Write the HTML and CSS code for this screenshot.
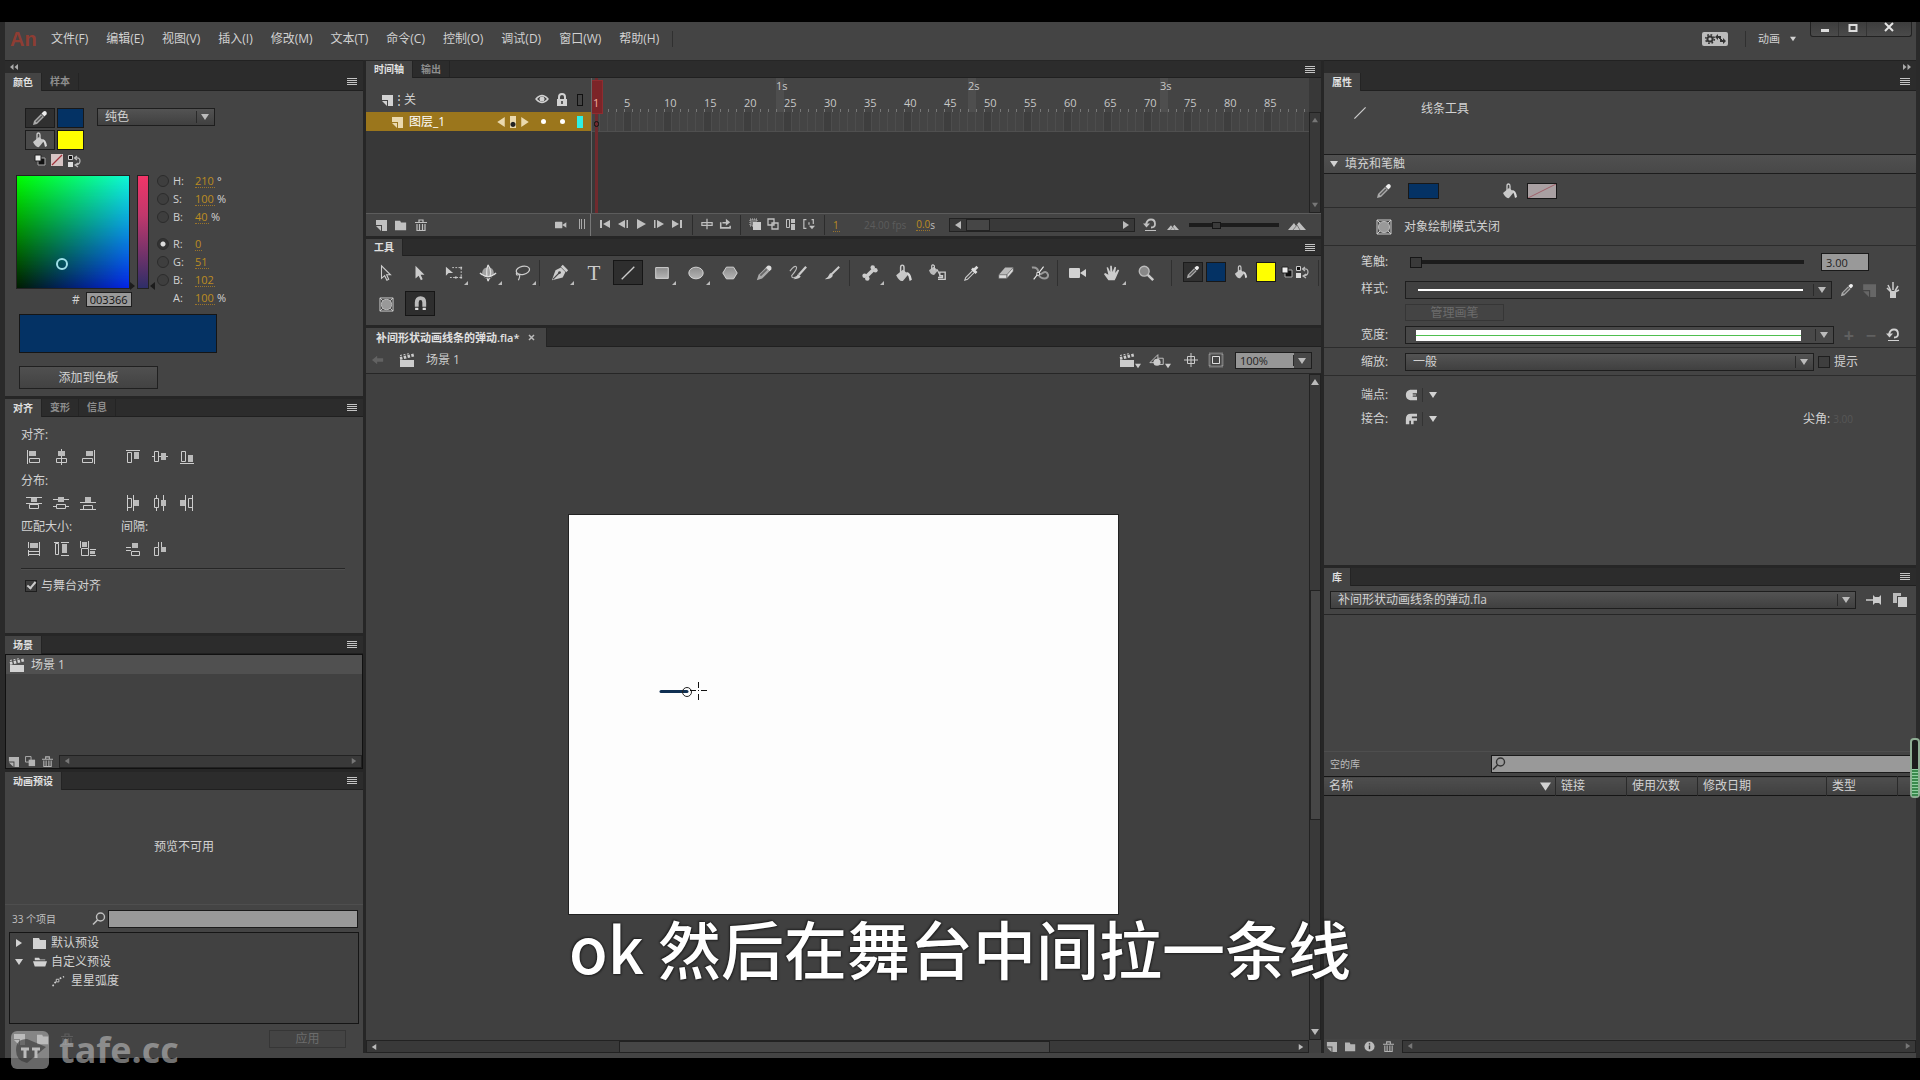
FILE: index.html
```html
<!DOCTYPE html>
<html lang="zh-CN">
<head>
<meta charset="utf-8">
<title>补间形状动画线条的弹动.fla</title>
<link rel="stylesheet" href="styles.css">
</head>
<body>
<svg class="sprite" aria-hidden="true">
  <linearGradient id="lg" x1="0" y1="0" x2="0" y2="1"><stop offset="0" stop-color="#8c8c8c"/><stop offset="1" stop-color="#b5b5b5"/></linearGradient>
  <symbol id="menu" viewBox="0 0 10 8"><path d="M0 .5h10M0 2.5h10M0 4.5h10M0 6.5h10" stroke="currentColor"/></symbol>
  <symbol id="pencil" viewBox="0 0 16 16"><path d="M1 15l1-4 7-7 3 3-7 7z" fill="#aaa"/><path d="M4 12l6-6" stroke="#555" stroke-width="1.5"/><path d="M9.500 3.500l2-2q1.500-1 2.700.2t.2 2.700l-2 2z" fill="#eee"/></symbol>
  <symbol id="bucket" viewBox="0 0 16 16"><path d="M1 10l6-5 5 4-5 6q-3 1-6-5z" fill="#c8c8c8"/><path d="M5 9V3q0-2 1.500-2T8 3v5" fill="none" stroke="#ccc" stroke-width="1.300"/><path d="M10 7q4 0 5 7l-2 1-1-4z" fill="#d8d8d8"/></symbol>
  <symbol id="bw" viewBox="0 0 12 12"><path d="M4 4h7v7H4z" fill="#111" stroke="#aaa"/><path d="M1 1h6v6H1z" fill="#eee" stroke="#222"/></symbol>
  <symbol id="none" viewBox="0 0 12 12"><path d="M0 0h12v12H0z" fill="#d5c3c3"/><path d="M1 11L11 1" stroke="#a3333c" stroke-width="1.300"/></symbol>
  <symbol id="swap" viewBox="0 0 14 12"><path d="M.5.5h4v4h-4z" fill="#111" stroke="#ccc"/><path d="M0 7h5v5H0z" fill="#ddd"/><path d="M7 3q5-1 5 3 0 3-4 4M9 1L6.500 3 9 5M10 8l-3 2 3 2" fill="none" stroke="#bbb" stroke-width="1.200"/></symbol>
  <symbol id="clap" viewBox="0 0 16 14"><path d="M1 7h14v7H1z" fill="currentColor"/><path d="M1 5.500L15 2" stroke="currentColor" stroke-width="3" stroke-dasharray="2.500 1.400"/><path d="M1 2.500L11 .5" stroke="currentColor" stroke-dasharray="2 1.500"/></symbol>
  <symbol id="new" viewBox="0 0 12 12"><path d="M1 1h11v11H7V6H1z" fill="currentColor"/><path d="M1 7h5v5z" fill="currentColor"/></symbol>
  <symbol id="folder" viewBox="0 0 14 12"><path d="M0 1h6l1 2h6v9H0z" fill="currentColor"/></symbol>
  <symbol id="folderopen" viewBox="0 0 16 12"><path d="M2 1h5l1 2h6v1H2zM0 5h16l-2 6H2z" fill="currentColor"/></symbol>
  <symbol id="trash" viewBox="0 0 12 12"><path d="M0 3.500h12M4 3V1h4v2M2 5v6.500h8V5M4.500 5v6M7.500 5v6" fill="none" stroke="currentColor" stroke-width="1.200"/></symbol>
  <symbol id="dup" viewBox="0 0 12 12"><path d="M.6.600h6v6h-6z" fill="none" stroke="currentColor"/><path d="M4 4h7v7H4z" fill="currentColor"/></symbol>
  <symbol id="search" viewBox="0 0 14 14"><circle cx="8.500" cy="5" r="4" fill="none" stroke="currentColor" stroke-width="1.400"/><path d="M5.500 8L1 12.500" stroke="currentColor" stroke-width="1.600"/></symbol>
  <symbol id="motion" viewBox="0 0 16 14"><path d="M2 13Q6 5 15 2" fill="none" stroke="currentColor" stroke-width="1.800" stroke-dasharray="2 2"/><path d="M6 5h3v3H6z" fill="#333" stroke="currentColor"/></symbol>
  <symbol id="tri" viewBox="0 0 8 8"><path d="M0 1h8L4 7z" fill="currentColor"/></symbol>
  <symbol id="triR" viewBox="0 0 8 8"><path d="M1 0v8l6-4z" fill="currentColor"/></symbol>
  <symbol id="triL" viewBox="0 0 8 8"><path d="M7 0v8L1 4z" fill="currentColor"/></symbol>
  <symbol id="triU" viewBox="0 0 8 8"><path d="M0 7h8L4 1z" fill="currentColor"/></symbol>
  <!-- align, distribute, match and space -->
  <symbol id="a1" viewBox="0 0 16 16"><path d="M1.500 1v14M3.500 9.500h10v4h-10z" fill="none" stroke="#ccc"/><path d="M3 2h7v5H3z" fill="#bbb"/></symbol>
  <symbol id="a2" viewBox="0 0 16 16"><path d="M8.500 0v16M3.500 9.500h10v4h-10z" fill="none" stroke="#ccc"/><path d="M5 2h7v5H5z" fill="#bbb"/></symbol>
  <symbol id="a3" viewBox="0 0 16 16"><path d="M14.500 1v14M2.500 9.500h10v4h-10z" fill="none" stroke="#ccc"/><path d="M6 2h7v5H6z" fill="#bbb"/></symbol>
  <symbol id="a4" viewBox="0 0 16 16"><path d="M1 1.500h14M2.500 3.500h4v10h-4z" fill="none" stroke="#ccc"/><path d="M9 3h5v7H9z" fill="#bbb"/></symbol>
  <symbol id="a5" viewBox="0 0 16 16"><path d="M0 7.500h16" stroke="#ccc"/><path d="M2.500 2.500h4v10h-4z" fill="#444" stroke="#ccc"/><path d="M9 4h5v7H9z" fill="#bbb"/></symbol>
  <symbol id="a6" viewBox="0 0 16 16"><path d="M1 14.500h14M2.500 2.500h4v10h-4z" fill="none" stroke="#ccc"/><path d="M9 6h5v7H9z" fill="#bbb"/></symbol>
  <symbol id="d1" viewBox="0 0 16 16"><path d="M0 2.500h16M0 8.500h16M3.500 9.500h9v4h-9z" fill="none" stroke="#ccc"/><path d="M5 3h6v4H5z" fill="#bbb"/></symbol>
  <symbol id="d2" viewBox="0 0 16 16"><path d="M0 4.500h16M0 11.500h16" stroke="#ccc"/><path d="M3.500 9.500h9v4h-9z" fill="#444" stroke="#ccc"/><path d="M5 2h6v5H5z" fill="#bbb"/></symbol>
  <symbol id="d3" viewBox="0 0 16 16"><path d="M0 7.500h16M0 14.500h16M3.500 10.500h9v4h-9z" fill="none" stroke="#ccc"/><path d="M5 2h6v5H5z" fill="#bbb"/></symbol>
  <symbol id="e1" viewBox="0 0 16 16"><path d="M2.500 0v16M8.500 0v16M2.500 3.500h4v9h-4z" fill="none" stroke="#ccc"/><path d="M9 5h5v6H9z" fill="#bbb"/></symbol>
  <symbol id="e2" viewBox="0 0 16 16"><path d="M4.500 0v16M11.500 0v16" stroke="#ccc"/><path d="M2.500 3.500h4v9h-4z" fill="#444" stroke="#ccc"/><path d="M9 5h5v6H9z" fill="#bbb"/></symbol>
  <symbol id="e3" viewBox="0 0 16 16"><path d="M6.500 0v16M13.500 0v16M9.500 3.500h4v9h-4z" fill="none" stroke="#ccc"/><path d="M1 5h5v6H1z" fill="#bbb"/></symbol>
  <symbol id="m1" viewBox="0 0 16 16"><path d="M2.500 1v6M13.500 1v14M2.500 9v6M2.500 10.500h11v3h-11z" fill="none" stroke="#ccc"/><path d="M4 2h8v5H4z" fill="#bbb"/></symbol>
  <symbol id="m2" viewBox="0 0 16 16"><path d="M1 1.500h5M8 1.500h8M8 14.500h8M2.500 2.500h3v11h-3z" fill="none" stroke="#ccc"/><path d="M9 3h5v9H9z" fill="#bbb"/></symbol>
  <symbol id="m3" viewBox="0 0 16 16"><path d="M.5 0v7M8.500 0v7M10 8.500h6M10 14.500h6M1.500 7.500h7v7h-7z" fill="none" stroke="#ccc"/><path d="M2 1h5v5H2zM10 10h5v3h-5z" fill="#bbb"/></symbol>
  <symbol id="s1" viewBox="0 0 16 16"><path d="M1 6.500h5M1 9.500h5M6.500 10.500h8v4h-8z" fill="none" stroke="#ccc"/><path d="M7 2h6v5H7z" fill="#bbb"/></symbol>
  <symbol id="s2" viewBox="0 0 16 16"><path d="M6.500 1v5M9.500 1v5M2.500 6.500h4v8h-4z" fill="none" stroke="#ccc"/><path d="M9 6h5v5H9z" fill="#bbb"/></symbol>
  <!-- timeline -->
  <symbol id="eye" viewBox="0 0 14 10"><path d="M1 5q6-7 12 0-6 7-12 0z" fill="none" stroke="currentColor" stroke-width="1.400"/><circle cx="7" cy="5" r="2.500" fill="currentColor"/></symbol>
  <symbol id="lock" viewBox="0 0 12 14"><path d="M3 7V4q0-3 3-3t3 3v3" fill="none" stroke="currentColor" stroke-width="2"/><path d="M1 6h10v7H1z" fill="currentColor"/><path d="M6 8v3" stroke="#333" stroke-width="1.500"/></symbol>
  <symbol id="cam" viewBox="0 0 18 12"><path d="M0 2q0-1 1-1h9q1 0 1 1v8q0 1-1 1H1q-1 0-1-1zM11 6l6-4v8z" fill="currentColor"/></symbol>
  <symbol id="first" viewBox="0 0 12 10"><path d="M1 1h2v8H1zM11 1v8L4 5z" fill="currentColor"/></symbol>
  <symbol id="prev" viewBox="0 0 12 10"><path d="M9.500 1h1.500v8H9.500zM8 1v8L1 5z" fill="currentColor"/></symbol>
  <symbol id="play" viewBox="0 0 12 10"><path d="M2 0v10l9-5z" fill="currentColor"/></symbol>
  <symbol id="next" viewBox="0 0 12 10"><path d="M1 1h1.500v8H1zM4 1v8l7-4z" fill="currentColor"/></symbol>
  <symbol id="last" viewBox="0 0 12 10"><path d="M9 1h2v8H9zM1 1v8l7-4z" fill="currentColor"/></symbol>
  <symbol id="center" viewBox="0 0 14 12"><path d="M7 0v12M1 4.500h12v3H1z" fill="none" stroke="currentColor" stroke-width="1.400"/></symbol>
  <symbol id="loop" viewBox="0 0 14 12"><path d="M2 4v6.500h11V8M4 4.500h6" fill="none" stroke="currentColor" stroke-width="1.800"/><path d="M8 0v8l5-4z" fill="currentColor"/></symbol>
  <symbol id="on1" viewBox="0 0 12 12"><path d="M1 1h7v7H1z" fill="#777" stroke="#bbb" stroke-dasharray="1 1"/><path d="M4 4h8v8H4z" fill="#ccc"/></symbol>
  <symbol id="on2" viewBox="0 0 12 12"><path d="M1 1h6v6H1zM5 5h6v6H5z" fill="none" stroke="currentColor" stroke-width="1.300"/></symbol>
  <symbol id="on3" viewBox="0 0 12 12"><path d="M1.500 1.500h3v8h-3z" fill="none" stroke="currentColor"/><path d="M6 1h4v4H6zM6 6h4v6H6z" fill="currentColor"/></symbol>
  <symbol id="on4" viewBox="0 0 14 12"><path d="M4 1H1v10h3M10 1h2v5M7 4v3" fill="none" stroke="currentColor" stroke-width="1.400"/><path d="M7 8h7l-3.500 4z" fill="currentColor"/></symbol>
  <symbol id="reset" viewBox="0 0 14 13"><path d="M3 6q1-5 5-5t4 4.500Q12 9 8 9" fill="none" stroke="currentColor" stroke-width="1.800"/><path d="M0 5h7L3.500 9zM2 11.500h11v1H2z" fill="currentColor"/></symbol>
  <symbol id="mount" viewBox="0 0 18 9"><path d="M0 9l6-7 2 3 3-4 7 8z" fill="currentColor"/><path d="M5 9l4-5 3 5" fill="none" stroke="#666" stroke-width=".8"/></symbol>
  <!-- tools -->
  <symbol id="t1" viewBox="0 0 20 20"><path d="M5 2v14l3.500-3 2.500 5 2-1-2.300-5H15z" fill="#444" stroke="#ccc" stroke-width="1.200"/></symbol>
  <symbol id="t2" viewBox="0 0 20 20"><path d="M5 2v14l3.500-3 2.500 5 2-1-2.300-5H15z" fill="#ccc"/></symbol>
  <symbol id="t3" viewBox="0 0 20 20"><path d="M1 3v10l3-3h5z" fill="#ccc"/><path d="M8 4h10v11H5" fill="none" stroke="#ccc" stroke-dasharray="2 1.500"/><path d="M17 3h2v2h-2zM17 14h2v2h-2zM11 14h2v2h-2z" fill="#ccc"/></symbol>
  <symbol id="t4" viewBox="0 0 20 20"><circle cx="10" cy="10" r="6.500" fill="#a2a2a2"/><path d="M10 1q-3 8 0 18M10 1q6 8 0 18M1 10q9 8 18 0" stroke="#ddd" fill="none" stroke-width="1.400"/><path d="M3 13q7 5 14 0" stroke="#444" fill="none"/></symbol>
  <symbol id="t5" viewBox="0 0 20 20"><ellipse cx="11" cy="7" rx="7.500" ry="4.500" fill="none" stroke="#ccc" stroke-width="1.400" transform="rotate(-12 11 7)"/><path d="M4 9q-1 4 2 3t0 6" fill="none" stroke="#ccc" stroke-width="1.300"/></symbol>
  <symbol id="t6" viewBox="0 0 20 20"><path d="M1 18L5 7l6-3 5 5-3 6z" fill="#ccc"/><path d="M12 2l6 6" stroke="#ccc" stroke-width="3"/><path d="M2 17l7-7" stroke="#444" stroke-width="1.200"/><circle cx="9.500" cy="9.500" r="1.500" fill="#444"/></symbol>
  <symbol id="t8" viewBox="0 0 20 20"><path d="M3 17L17 3" stroke="#ccc" stroke-width="1.500"/></symbol>
  <symbol id="t9" viewBox="0 0 20 20"><path d="M3 4h14v12H3z" fill="url(#lg)" stroke="#ddd"/></symbol>
  <symbol id="t10" viewBox="0 0 20 20"><ellipse cx="10" cy="10" rx="8" ry="6.500" fill="url(#lg)" stroke="#ddd"/></symbol>
  <symbol id="t11" viewBox="0 0 20 20"><path d="M6 3.500h8l4 6.500-4 6.500H6L2 10z" fill="url(#lg)" stroke="#ddd"/></symbol>
  <symbol id="t12" viewBox="0 0 20 20"><path d="M2 18l2-6 8-8 4 4-8 8z" fill="#aaa"/><path d="M6 13l7-7" stroke="#666" stroke-width="2"/><path d="M12 4l2-2q2-1 3.500.5T18 6l-2 2z" fill="#ddd"/></symbol>
  <symbol id="t13" viewBox="0 0 20 20"><path d="M1 8q5-7 7-5T3 13q0 4 6 1" fill="none" stroke="#bbb" stroke-width="1.300"/><path d="M19 3l-8 9" stroke="#ccc" stroke-width="2.500"/><path d="M10 11l3 3q-2 3-8 3 3-2 5-6z" fill="#ccc"/></symbol>
  <symbol id="t14" viewBox="0 0 20 20"><path d="M18 3l-9 9" stroke="#ccc" stroke-width="2.200"/><path d="M8 10l3 3q-2 4-9 4 4-2 6-7z" fill="#ccc"/></symbol>
  <symbol id="t15" viewBox="0 0 20 20"><path d="M6 14l8-8" stroke="#ccc" stroke-width="4"/><circle cx="4" cy="13" r="2.500" fill="#ccc"/><circle cx="7" cy="16" r="2.500" fill="#ccc"/><circle cx="13" cy="4" r="2.500" fill="#ccc"/><circle cx="16" cy="7" r="2.500" fill="#ccc"/></symbol>
  <symbol id="t17" viewBox="0 0 20 20"><path d="M0 7l5-4 5 4-4 5q-4 1-6-5z" fill="#bbb"/><path d="M3 6V2q1-2 3 0v5M9 6l3 6" fill="none" stroke="#ccc" stroke-width="1.300"/><path d="M10 17h8V9h-6v4h3v2h-5" fill="none" stroke="#ccc" stroke-width="1.500"/></symbol>
  <symbol id="t18" viewBox="0 0 20 20"><path d="M2 18l1-3 8-8 2 2-8 8z" fill="#444" stroke="#ccc" stroke-width="1.200"/><path d="M10 5l5 5M12 7l4-4" stroke="#ddd" stroke-width="3"/></symbol>
  <symbol id="t19" viewBox="0 0 20 20"><path d="M2 12l7-8h9l-7 8z" fill="#bbb"/><path d="M2 12h9v4H2zM11 16v-4l7-8v4z" fill="#ddd" stroke="#555" stroke-width=".6"/></symbol>
  <symbol id="t20" viewBox="0 0 20 20"><path d="M1 4q6-1 7 4t5 2 6 2q0 4-4 4-4 0-6-3" fill="none" stroke="#999" stroke-width="2.200"/><path d="M3 17L14 3" stroke="#eee" stroke-width="1.200"/><path d="M6.500 9.500h3v3h-3z" fill="#333" stroke="#eee"/></symbol>
  <symbol id="t22" viewBox="0 0 20 20"><path d="M6 18L1 11l1.500-1L6 12 4 4l1.500-.5L8 9V2h1.800l.7 7L13 3l1.500.5L13.500 10l3-4 1.500 1-3.500 8-1.500 3z" fill="#ccc"/></symbol>
  <symbol id="t23" viewBox="0 0 20 20"><circle cx="8" cy="8" r="5.500" fill="#888" stroke="#bbb" stroke-width="1.500"/><path d="M12 12l6 6" stroke="#ccc" stroke-width="2.800"/></symbol>
  <symbol id="objdraw" viewBox="0 0 16 16"><path d="M1 1h14v14H1z" fill="#4a4a4a" stroke="#ccc"/><path d="M1 1l3 3M15 1l-3 3M1 15l3-3M15 15l-3-3" stroke="#ccc"/><circle cx="8" cy="8" r="5.500" fill="#999" stroke="#bbb"/></symbol>
  <symbol id="magnet" viewBox="0 0 14 14"><path d="M3.500 10V6q0-4 3.500-4t3.500 4v4" fill="none" stroke="#bbb" stroke-width="3.600"/><path d="M2 12h3M9 12h3" stroke="#ddd" stroke-width="2"/></symbol>
  <symbol id="back" viewBox="0 0 14 10"><path d="M0 5l6-5v3h7v4H6v3z" fill="#626262"/></symbol>
  <symbol id="shapes" viewBox="0 0 18 14"><path d="M1 10L10 1v9z" fill="none" stroke="#ccc"/><path d="M10 5h6v7h-4" fill="none" stroke="#ccc"/><circle cx="9" cy="9.500" r="4" fill="#ccc"/></symbol>
  <symbol id="reg" viewBox="0 0 16 16"><path d="M8 1v14M1 8h14M4.500 4.500h7v7h-7z" fill="none" stroke="#ccc"/></symbol>
  <symbol id="clip" viewBox="0 0 16 16"><path d="M1.500 1.500h13v13h-13z" fill="none" stroke="#aaa" stroke-width="2" stroke-dasharray="1 1"/><path d="M4.500 4.500h7v7h-7z" fill="#444" stroke="#ddd"/></symbol>
  <symbol id="brushes" viewBox="0 0 14 18"><path d="M4 10h6v7H4z" fill="#ccc"/><path d="M7 9V1M5 10L2 4M9 10l3-5M1 7l4 4M13 9l-4 2" stroke="#ccc" stroke-width="1.500"/></symbol>
  <symbol id="cap" viewBox="0 0 14 14"><path d="M14 1H6Q1 2 1 7t5 6h8V9H9V5h5z" fill="#ccc"/><path d="M7 7h6" stroke="#ddd"/></symbol>
  <symbol id="join" viewBox="0 0 14 14"><path d="M14 1H7Q1 1 1 7v6h4v-4h2v4h3V9h4V6H8V4h6z" fill="#ccc"/></symbol>
  <symbol id="pin" viewBox="0 0 16 12"><path d="M0 6h7" stroke="#ccc" stroke-width="1.500"/><path d="M7 1l2 2h4l2-2v10l-2-2H9l-2 2z" fill="#ccc"/></symbol>
  <symbol id="newlib" viewBox="0 0 16 16"><path d="M1 1h8v3H5v7H1z" fill="#bbb"/><path d="M6 5h9v10H6z" fill="#ccc"/></symbol>
  <symbol id="info" viewBox="0 0 12 12"><circle cx="6" cy="6" r="5.500" fill="#bbb"/><path d="M6 5v4M6 2.500v1.300" stroke="#333" stroke-width="1.500"/></symbol>
  <symbol id="gear" viewBox="0 0 26 14"><rect width="26" height="14" rx="2" fill="#bcbcbc"/><circle cx="8" cy="7" r="2.600" fill="none" stroke="#333" stroke-width="2"/><circle cx="8" cy="7" r="4.300" fill="none" stroke="#333" stroke-width="1.600" stroke-dasharray="1.700 1.680"/><path d="M13 5l3-3v2h3v3h-2V6h-1v2zM24 9l-3-3v2h-1V7h-2v3h3v2z" fill="#333"/></symbol>
</svg>

<main class="app">
  <header class="menubar">
    <span class="logo">An</span>
    <nav class="menus">
      <a href="#">文件(F)</a><a href="#">编辑(E)</a><a href="#">视图(V)</a><a href="#">插入(I)</a><a href="#">修改(M)</a><a href="#">文本(T)</a><a href="#">命令(C)</a><a href="#">控制(O)</a><a href="#">调试(D)</a><a href="#">窗口(W)</a><a href="#">帮助(H)</a>
    </nav>
    <i class="sep"></i>
    <div class="workspace">
      <button class="bare" aria-label="同步设置"><svg class="gear"><use href="#gear"/></svg></button>
      <i class="sep"></i>
      <button class="bare ws-name">动画 <svg class="i6"><use href="#tri"/></svg></button>
    </div>
    <div class="winctl">
      <button aria-label="最小化"><svg width="10" height="12"><path d="M1 8.500h8" stroke="#ddd" stroke-width="3"/></svg></button>
      <button aria-label="最大化"><svg width="12" height="12"><path d="M2.500 3h7v6h-7z" fill="none" stroke="#ddd" stroke-width="2"/></svg></button>
      <button class="close" aria-label="关闭"><svg width="12" height="12"><path d="M2 1l8 8M10 1l-8 8" stroke="#e4e4e4" stroke-width="2"/></svg></button>
    </div>
  </header>

  <div class="workarea">
    <aside class="dock left">
      <div class="collapse"><svg width="8" height="6"><path d="M3.500 0v6L0 3zM8 0v6L4.500 3z" fill="#aaa"/></svg></div>
      <section class="panel color">
        <div class="tabs"><button class="on">颜色</button><button>样本</button><svg class="pm"><use href="#menu"/></svg></div>
        <div class="body">
          <div class="color-top">
            <div class="chips">
              <button class="well dark" aria-label="笔触颜色"><svg class="i16"><use href="#pencil"/></svg></button><button class="sw blue" aria-label="笔触"></button>
              <button class="well" aria-label="填充颜色"><svg class="i16"><use href="#bucket"/></svg></button><button class="sw yellow" aria-label="填充"></button>
            </div>
            <div class="combo w118"><select aria-label="颜色类型"><option>纯色</option></select></div>
          </div>
          <div class="minis"><svg class="i12"><use href="#bw"/></svg><svg class="i12"><use href="#none"/></svg><svg class="i14"><use href="#swap"/></svg></div>
          <div class="picker">
            <div class="field"><i class="ring"></i></div>
            <div class="hue"><svg width="25" height="10"><path d="M0 1v8l5-4z" fill="#1c1c1c"/><path d="M25 1v8l-5-4z" fill="#1c1c1c"/></svg></div>
            <div class="values">
              <label><input type="radio" name="ch">H:</label><input class="hot n3" aria-label="色相" value="210"><span>°</span>
              <label><input type="radio" name="ch">S:</label><input class="hot n3" aria-label="饱和度" value="100"><span>%</span>
              <label><input type="radio" name="ch">B:</label><input class="hot n2" aria-label="亮度" value="40"><span>%</span>
              <label class="rgb"><input type="radio" name="ch" checked>R:</label><input class="hot n1 rgb" aria-label="红" value="0"><span></span>
              <label><input type="radio" name="ch">G:</label><input class="hot n2" aria-label="绿" value="51"><span></span>
              <label><input type="radio" name="ch">B:</label><input class="hot n3" aria-label="蓝" value="102"><span></span>
              <label class="alpha">A:</label><input class="hot n3" aria-label="Alpha" value="100"><span>%</span>
            </div>
          </div>
          <label class="hex"># <input value="003366"></label>
          <div class="preview"></div>
          <button class="btn add">添加到色板</button>
        </div>
      </section>

      <section class="panel align">
        <div class="tabs"><button class="on">对齐</button><button>变形</button><button>信息</button><svg class="pm"><use href="#menu"/></svg></div>
        <div class="body">
          <p>对齐:</p>
          <div class="icons"><svg><use href="#a1"/></svg><svg><use href="#a2"/></svg><svg><use href="#a3"/></svg><svg class="g2"><use href="#a4"/></svg><svg><use href="#a5"/></svg><svg><use href="#a6"/></svg></div>
          <p>分布:</p>
          <div class="icons"><svg><use href="#d1"/></svg><svg><use href="#d2"/></svg><svg><use href="#d3"/></svg><svg class="g2"><use href="#e1"/></svg><svg><use href="#e2"/></svg><svg><use href="#e3"/></svg></div>
          <p class="two"><span>匹配大小:</span><span>间隔:</span></p>
          <div class="icons"><svg><use href="#m1"/></svg><svg><use href="#m2"/></svg><svg><use href="#m3"/></svg><svg class="g2"><use href="#s1"/></svg><svg><use href="#s2"/></svg></div>
          <hr>
          <label class="check"><input type="checkbox" checked>与舞台对齐</label>
        </div>
      </section>

      <section class="panel scene">
        <div class="tabs"><button class="on">场景</button><svg class="pm"><use href="#menu"/></svg></div>
        <div class="list">
          <div class="scene-row"><svg class="i16"><use href="#clap"/></svg>场景 1</div>
          <div class="listfoot"><svg class="i11"><use href="#new"/></svg><svg class="i11"><use href="#dup"/></svg><svg class="i11"><use href="#trash"/></svg><div class="hs dim"><svg class="i6"><use href="#triL"/></svg><svg class="i6"><use href="#triR"/></svg></div></div>
        </div>
      </section>

      <section class="panel presets">
        <div class="tabs"><button class="on">动画预设</button><svg class="pm"><use href="#menu"/></svg></div>
        <div class="nopreview">预览不可用</div>
        <label class="find"><span>33 个项目</span><svg class="i14"><use href="#search"/></svg><input></label>
        <ul class="tree">
          <li><svg class="i8"><use href="#triR"/></svg><svg class="i14"><use href="#folder"/></svg>默认预设</li>
          <li><svg class="i8"><use href="#tri"/></svg><svg class="i14"><use href="#folderopen"/></svg>自定义预设</li>
          <li class="leaf"><svg class="i14"><use href="#motion"/></svg>星星弧度</li>
        </ul>
        <div class="presetfoot"><svg class="i12"><use href="#new"/></svg><svg class="i12"><use href="#folder"/></svg><svg class="i12 off"><use href="#trash"/></svg><button class="btn off" disabled>应用</button></div>
      </section>
    </aside>

    <section class="center">
      <section class="panel timeline">
        <div class="tabs"><button class="on">时间轴</button><button>输出</button><svg class="pm"><use href="#menu"/></svg></div>
        <div class="tl">
          <div class="layers">
            <div class="lhead"><svg class="i12"><use href="#new"/></svg><span class="dots">⋮</span><span>关</span><svg class="eye"><use href="#eye"/></svg><svg class="lock"><use href="#lock"/></svg><i class="outline"></i></div>
            <div class="lrow"><svg class="i12"><use href="#new"/></svg><span>图层_1</span><svg class="i10 kf"><use href="#triL"/></svg><i class="key"></i><svg class="i10"><use href="#triR"/></svg><i class="dot"></i><i class="dot"></i><i class="cyan"></i></div>
          </div>
          <div class="frames">
            <div class="seconds"><span style="--f:24">1s</span><span style="--f:48">2s</span><span style="--f:72">3s</span></div>
            <div class="ruler"><span style="--f:1">1</span><span style="--f:5">5</span><span style="--f:10">10</span><span style="--f:15">15</span><span style="--f:20">20</span><span style="--f:25">25</span><span style="--f:30">30</span><span style="--f:35">35</span><span style="--f:40">40</span><span style="--f:45">45</span><span style="--f:50">50</span><span style="--f:55">55</span><span style="--f:60">60</span><span style="--f:65">65</span><span style="--f:70">70</span><span style="--f:75">75</span><span style="--f:80">80</span><span style="--f:85">85</span></div>
            <div class="cells"><i class="kfo"></i></div>
            <i class="playhead"></i>
          </div>
          <div class="vs dim"><svg class="i6"><use href="#triU"/></svg><svg class="i6"><use href="#tri"/></svg></div>
        </div>
        <div class="tlfoot">
          <div class="lf"><svg class="i12"><use href="#new"/></svg><svg class="i12"><use href="#folder"/></svg><svg class="i12"><use href="#trash"/></svg><svg class="i12 end"><use href="#cam"/></svg><svg width="6" height="12"><path d="M.5 0v10M2.500 0v10M5.500 0v10" stroke="#aaa"/></svg></div>
          <div class="tr"><svg><use href="#first"/></svg><svg><use href="#prev"/></svg><svg><use href="#play"/></svg><svg><use href="#next"/></svg><svg><use href="#last"/></svg></div>
          <div class="tr"><svg><use href="#center"/></svg><svg><use href="#loop"/></svg></div>
          <div class="tr"><svg><use href="#on1"/></svg><svg><use href="#on2"/></svg><svg><use href="#on3"/></svg><svg><use href="#on4"/></svg></div>
          <div class="nums"><input class="hot n1" aria-label="当前帧" value="1"><span class="fps">24.00 fps</span><span class="time"><input class="hot n2" aria-label="时间" value="0.0">s</span></div>
          <div class="hs tlscroll"><svg class="i8"><use href="#triL"/></svg><i></i><svg class="i8 end"><use href="#triR"/></svg></div>
          <svg class="i14"><use href="#reset"/></svg>
          <svg class="mt1"><use href="#mount"/></svg>
          <input class="zoom" type="range" value="28" aria-label="缩放时间轴">
          <svg class="mt2"><use href="#mount"/></svg>
        </div>
      </section>

      <section class="panel tools">
        <div class="tabs"><button class="on">工具</button><svg class="pm"><use href="#menu"/></svg></div>
        <div class="toolrow">
          <button aria-label="选择"><svg><use href="#t1"/></svg></button><button aria-label="部分选取"><svg><use href="#t2"/></svg></button><button class="more" aria-label="任意变形"><svg><use href="#t3"/></svg></button><button class="more" aria-label="3D 旋转"><svg><use href="#t4"/></svg></button><button class="more" aria-label="套索"><svg><use href="#t5"/></svg></button>
          <i></i><button class="more" aria-label="钢笔"><svg><use href="#t6"/></svg></button><button class="txt">T</button><button class="sel" aria-label="线条"><svg><use href="#t8"/></svg></button><button class="more" aria-label="矩形"><svg><use href="#t9"/></svg></button><button class="more" aria-label="椭圆"><svg><use href="#t10"/></svg></button><button aria-label="多角星形"><svg><use href="#t11"/></svg></button><button aria-label="铅笔"><svg><use href="#t12"/></svg></button><button aria-label="画笔"><svg><use href="#t13"/></svg></button><button aria-label="刷子"><svg><use href="#t14"/></svg></button>
          <i></i><button class="more" aria-label="骨骼"><svg><use href="#t15"/></svg></button><button aria-label="颜料桶"><svg><use href="#bucket"/></svg></button><button aria-label="墨水瓶"><svg><use href="#t17"/></svg></button><button aria-label="滴管"><svg><use href="#t18"/></svg></button><button aria-label="橡皮擦"><svg><use href="#t19"/></svg></button><button aria-label="宽度"><svg><use href="#t20"/></svg></button>
          <i></i><button aria-label="摄像头"><svg><use href="#cam"/></svg></button><button class="more" aria-label="手形"><svg><use href="#t22"/></svg></button><button aria-label="缩放"><svg><use href="#t23"/></svg></button>
          <i class="far"></i><div class="toolcolors"><span class="well dark"><svg class="i14"><use href="#pencil"/></svg></span><span class="sw blue"></span><svg class="i14 tb"><use href="#bucket"/></svg><span class="sw yellow"></span><svg class="i12"><use href="#bw"/></svg><svg class="i14"><use href="#swap"/></svg></div><i></i>
        </div>
        <div class="toolrow opts"><button aria-label="对象绘制"><svg class="i16"><use href="#objdraw"/></svg></button><button class="sel" aria-label="贴紧至对象"><svg class="i16"><use href="#magnet"/></svg></button></div>
      </section>

      <section class="doc">
        <div class="tabs"><button class="on">补间形状动画线条的弹动.fla* <svg width="7" height="7"><path d="M1 1l5 5M6 1L1 6" stroke="#bbb" stroke-width="1.500"/></svg></button></div>
        <div class="scenebar"><svg class="i12"><use href="#back"/></svg><svg class="i16"><use href="#clap"/></svg><span>场景 1</span>
          <svg class="i16 end"><use href="#clap"/></svg><svg class="i6 low"><use href="#tri"/></svg><svg class="i16"><use href="#shapes"/></svg><svg class="i6 low"><use href="#tri"/></svg><svg class="i16 gl"><use href="#reg"/></svg><svg class="i16 gl"><use href="#clip"/></svg>
          <div class="combo zoomcombo"><select aria-label="缩放比例"><option>100%</option></select></div></div>
        <div class="board">
          <div class="stage"><svg viewBox="0 0 549 399"><path d="M92 176.500h26" stroke="#0f2f52" stroke-width="3" stroke-linecap="round"/><circle cx="118" cy="177" r="4.500" fill="none" stroke="#222"/><path d="M129.500 167v6M129.500 179v6M121 175.500h6M132 175.500h6M129 175.500h1" stroke="#111"/></svg></div>
        </div>
        <div class="vs dv"><svg class="i8"><use href="#triU"/></svg><i></i><svg class="i8"><use href="#tri"/></svg></div>
        <div class="hs dh"><svg class="i6"><use href="#triL"/></svg><i></i><svg class="i6"><use href="#triR"/></svg></div>
      </section>
    </section>

    <aside class="dock right">
      <div class="collapse"><svg width="8" height="6"><path d="M0 0v6l3.500-3zM4.500 0v6L8 3z" fill="#aaa"/></svg></div>
      <section class="panel props">
        <div class="tabs"><button class="on">属性</button><svg class="pm"><use href="#menu"/></svg></div>
        <div class="what"><svg class="i16"><use href="#t8"/></svg>线条工具</div>
        <h2><svg class="i8"><use href="#tri"/></svg>填充和笔触</h2>
        <div class="pcolors"><svg class="i16"><use href="#pencil"/></svg><button class="sw blue" aria-label="笔触颜色"></button><svg class="i16 pb"><use href="#bucket"/></svg><button class="sw nofill" aria-label="无填充"><svg width="28" height="14"><path d="M0 14L28 0" stroke="#a0606a"/></svg></button></div>
        <div class="pobj"><svg class="i16"><use href="#objdraw"/></svg>对象绘制模式关闭</div>
        <div class="stroke">
          <label for="sz">笔触:</label><div class="line"><input type="range" id="sz" value="0"><input class="num" aria-label="笔触大小" value="3.00"></div>
          <label for="st">样式:</label><div class="line"><div class="combo sty"><select id="st"><option></option></select></div><svg class="i14"><use href="#pencil"/></svg><svg class="i14 off2"><use href="#new"/></svg><svg class="brs"><use href="#brushes"/></svg></div>
          <span></span><button class="btn off" disabled>管理画笔</button>
          <label for="wd">宽度:</label><div class="line"><div class="combo wid"><select id="wd"><option></option></select></div><b class="pm2">+</b><b class="pm2">−</b><svg class="i14"><use href="#reset"/></svg></div>
        </div>
        <div class="scale"><label for="sc">缩放:</label><div class="combo"><select id="sc"><option>一般</option></select></div><label class="check"><input type="checkbox">提示</label></div>
        <div class="ends">
          <span>端点:</span><button class="bare"><svg class="i12"><use href="#cap"/></svg><i></i><svg class="i8"><use href="#tri"/></svg></button><span></span>
          <span>接合:</span><button class="bare"><svg class="i12"><use href="#join"/></svg><i></i><svg class="i8"><use href="#tri"/></svg></button><span class="miter">尖角: <em>3.00</em></span>
        </div>
      </section>
      <section class="panel library">
        <div class="tabs"><button class="on">库</button><svg class="pm"><use href="#menu"/></svg></div>
        <div class="libtop"><div class="combo"><select aria-label="文档"><option>补间形状动画线条的弹动.fla</option></select></div><svg class="i16"><use href="#pin"/></svg><svg class="i16"><use href="#newlib"/></svg></div>
        <div class="libprev"></div>
        <label class="libfind"><span>空的库</span><span class="box"><svg class="i14"><use href="#search"/></svg><input></span></label>
        <table><colgroup><col><col class="c1"><col class="c2"><col class="c3"><col class="c4"><col class="c5"></colgroup><thead><tr><th><span>名称<svg class="sort"><use href="#tri"/></svg></span></th><th>链接</th><th>使用次数</th><th>修改日期</th><th>类型</th><th></th></tr></thead></table>
        <div class="libbody"></div>
        <div class="listfoot"><svg class="i11"><use href="#new"/></svg><svg class="i11"><use href="#folder"/></svg><svg class="i11"><use href="#info"/></svg><svg class="i11"><use href="#trash"/></svg><div class="hs dim"><svg class="i6"><use href="#triL"/></svg><svg class="i6"><use href="#triR"/></svg></div></div>
      </section>
    </aside>
  </div>
</main>
<p class="subtitle">ok 然后在舞台中间拉一条线</p>
<div class="mark"><svg width="40" height="40" viewBox="0 0 40 40"><rect x="1" y="1" width="38" height="38" rx="6" fill="#bbb" opacity=".55"/><path d="M6 20q0-11 11-11l19 8-19 16Q6 31 6 20z" fill="#333" opacity=".6"/><path d="M11 19h8M15 19v9M22 19h8M26 19v9" stroke="#bbb" stroke-width="3"/></svg><span>tafe.cc</span></div>
<div class="meter"><i></i></div>
</body>
</html>
```
FILE: styles.css
```css
* { box-sizing: border-box; }
body { margin: 0; min-height: 100vh; padding: 22px 0 23px; display: flex; flex-direction: column; background: #000; color: #d2d2d2; font: 12px/16px "Open Sans", "Noto Sans CJK SC", sans-serif; position: relative; }
button, input, select { font: inherit; color: inherit; margin: 0; padding: 0; border: 0; background: none; border-radius: 0; min-width: 0; }
button, select { appearance: none; }
a { color: inherit; text-decoration: none; }
p, ul, h2, hr { margin: 0; padding: 0; list-style: none; }
svg { display: block; flex: none; }
.sprite { position: absolute; width: 0; height: 0; }
.i6 { width: 6px; height: 6px; }
.i8 { width: 8px; height: 8px; }
.i10 { width: 10px; height: 10px; }
.i11 { width: 11px; height: 11px; }
.i12 { width: 12px; height: 12px; }
.i14 { width: 14px; height: 14px; }
.i16 { width: 16px; height: 16px; }
.end { margin-left: auto; }

.app { flex: 1; display: flex; flex-direction: column; background: #444; border: 0 solid #2a2a2a; border-width: 0 4px 0 5px; }
.menubar { height: 38px; display: flex; align-items: center; padding: 0 0 4px 5px; }
.logo { width: 41px; font: bold 20px/24px "Liberation Sans", sans-serif; color: #8e3d33; }
.menus { display: flex; gap: 18px; }
.sep { width: 1px; height: 16px; background: #303030; margin-left: 13px; }
.workspace { margin-left: auto; display: flex; align-items: center; }
.gear { width: 26px; height: 14px; }
.workspace .sep { margin-left: 17px; }
.bare { display: flex; align-items: center; }
.ws-name { gap: 10px; margin: 0 14px 0 12px; font-size: 11px; }
.winctl { align-self: flex-start; display: flex; border: 1px solid #222; border-top: 0; border-radius: 0 0 3px 3px; height: 15px; width: 102px; margin-right: 4px; background: linear-gradient(#3d3d3d, #4a4a4a); }
.winctl button { width: 28px; display: flex; justify-content: center; border-right: 1px solid #333; }
.winctl .close { flex: 1; border: 0; }

.workarea { flex: 1; display: grid; grid-template-columns: 358px minmax(0, 1fr) 592px; gap: 3px; background: #262626; border-bottom: 5px solid #444; }
.dock, .center { display: flex; flex-direction: column; min-width: 0; gap: 3px; }
.center { padding-top: 1px; }
.collapse { height: 13px; margin-bottom: -3px; background: #2c2c2c; border-top: 1px solid #222; padding: 3px 5px; }
.right .collapse svg { margin-left: auto; }
.panel { display: flex; flex-direction: column; background: #444; }
.tabs { height: 18px; display: flex; background: #2c2c2c; border-bottom: 1px solid #202020; font-size: 10px; line-height: 15px; align-items: stretch; color: #8e8e8e; }
.tabs button { padding: 0 8px; font-weight: 600; border-right: 1px solid #242424; }
.tabs .on { background: #444; color: #e0e0e0; margin-bottom: -1px; }
.pm { width: 10px; height: 8px; margin: 5px 6px 0 auto; color: #c4c4c4; }

/* shared controls */
.combo { position: relative; display: flex; align-self: center; }
.combo select { flex: 1; width: 100%; height: 18px; padding-left: 7px; border: 1px solid #1e1e1e; background: linear-gradient(#535353, #404040); }
.combo::before { content: ""; position: absolute; right: 18px; top: 3px; bottom: 3px; width: 1px; background: #2a2a2a; }
.combo::after { content: ""; position: absolute; right: 6px; top: 6px; border: 4px solid transparent; border-top: 6px solid #bbb; border-bottom: 0; }
.color-top .combo { width: 118px; align-self: flex-start; }
.btn { border: 1px solid #202020; background: linear-gradient(#505050, #424242); }
.btn.off { color: #6c6c6c; border-color: #363636; background: none; }
.off { color: #5c5c5c; }
.well { background: #4a4a4a; border: 1px solid #1c1c1c; display: flex; align-items: center; justify-content: center; }
.well.dark { background: #303030; }
.sw { border: 1px solid #181818; }
.blue { background: #043264; }
.yellow { background: #ff0; }
.hot { color: #bd8c22; border-bottom: 1px dotted #9a742a; height: 14px; font-size: 11px; line-height: 13px; }
.n3 { width: 20px; }
.n2 { width: 14px; }
.n1 { width: 7px; }
input[type=radio] { appearance: none; width: 12px; height: 12px; border-radius: 50%; border: 1px solid #2c2c2c; background: #3e3e3e; }
input[type=radio]:checked { background: radial-gradient(#ddd 2px, #333 3px); }
input[type=checkbox] { appearance: none; width: 12px; height: 12px; border: 1px solid #1e1e1e; background: #3e3e3e; position: relative; }
input[type=checkbox]:checked::after { content: ""; position: absolute; left: 3px; top: -1px; width: 3px; height: 7px; border: solid #ccc; border-width: 0 2px 2px 0; transform: rotate(40deg); }
.check { display: flex; align-items: center; gap: 4px; }
.hs, .vs { display: flex; align-items: center; background: #393939; border: 1px solid #222; color: #bbb; }
.hs { justify-content: space-between; padding: 0 4px; }
.vs { flex-direction: column; justify-content: space-between; padding: 4px 0; width: 12px; }
.dim { color: #777; }
.hs i, .vs i { background: #464646; border: 1px solid #222; }

/* colour */
.color { height: 323px; }
.color .body { padding: 17px 0 0 11px; display: flex; flex-direction: column; align-items: flex-start; }
.color-top { display: flex; gap: 13px; padding-left: 9px; }
.chips { display: grid; grid-template: 20px 20px / 30px 27px; gap: 2px; }
.minis { display: flex; gap: 5px; padding: 4px 0 7px 18px; height: 25px; }
.picker { display: flex; height: 116px; }
.field { width: 114px; height: 114px; border: 1px solid #222; background: linear-gradient(90deg, #0f0, #10f8d8); position: relative; }
.field::before { content: ""; position: absolute; inset: 0; background: linear-gradient(90deg, #001c00, #0424e8); mask: linear-gradient(transparent, #000); }
.ring { position: absolute; left: 39px; top: 82px; width: 12px; height: 12px; border: 2px solid #a0e0e8; border-radius: 50%; }
.hue { width: 12px; margin: 0 8px 0 7px; height: 114px; border: 1px solid #222; background: linear-gradient(#f23568, #c0386c 35%, #2e2e68); position: relative; }
.hue svg { position: absolute; left: -8px; bottom: -3px; }
.values { display: flex; flex-wrap: wrap; align-content: flex-start; width: 70px; height: 137px; margin: -3px 0 -20px; font-size: 11px; }
.values label { width: 38px; height: 18px; display: flex; align-items: center; gap: 4px; }
.values .rgb { margin-top: 9px; }
.values .hot { margin-top: 2px; }
.values input.rgb { margin-top: 11px; }
.values span { flex: 1; padding-left: 2px; line-height: 18px; }
.values .alpha { padding-left: 16px; }
.hex { display: flex; gap: 6px; align-items: center; margin-left: 56px; margin-top: 1px; line-height: 14px; }
.hex input { width: 46px; height: 15px; background: #999; border: 1px solid #1e1e1e; color: #111; font-size: 11px; line-height: 13px; padding-left: 3px; }
.preview { width: 198px; height: 39px; margin: 7px 0 0 3px; border: 1px solid #151515; background: #043264; }
.add { width: 139px; height: 23px; margin: 13px 0 0 3px; }

/* align */
.align { height: 234px; }
.align .body { padding: 9px 18px 0 16px; }
.align p { display: flex; height: 16px; line-height: 18px; }
.two span { width: 100px; }
.icons { display: flex; gap: 11px; height: 30px; padding: 7px 0 0 5px; }
.icons svg { width: 16px; height: 16px; }
.icons .g2 { margin-left: 18px; }
.align hr { border: 0; border-top: 1px solid #262626; border-bottom: 1px solid #4e4e4e; margin: 4px 0 8px; }
.align .check { padding-left: 4px; }

/* scenes */
.scene { height: 133px; }
.list { flex: 1; border: 1px solid #111; display: flex; flex-direction: column; background: #414141; }
.scene-row { display: flex; align-items: center; gap: 6px; padding: 1px 3px; background: #505050; height: 19px; }
.listfoot { margin-top: auto; display: flex; align-items: center; gap: 6px; padding-left: 2px; height: 14px; color: #b4b4b4; }
.listfoot .hs { flex: 1; height: 13px; }

/* presets */
.presets { flex: 1; padding-bottom: 5px; }
.nopreview { height: 115px; display: flex; align-items: center; justify-content: center; border-bottom: 1px solid #4e4e4e; }
.find { display: flex; align-items: center; padding: 5px 5px 4px 7px; font-size: 10px; color: #c0c0c0; }
.find span { width: 80px; }
.find input { flex: 1; height: 18px; margin-left: 2px; background: #999; border: 1px solid #1a1a1a; }
.tree { height: 92px; margin: 0 4px; border: 1px solid #151515; padding-left: 5px; background: #414141; }
.tree li { display: flex; align-items: center; gap: 4px; height: 19px; }
.tree .i8 { margin-right: 6px; }
.tree .leaf { padding-left: 36px; gap: 6px; }
.presetfoot { display: flex; gap: 12px; padding: 6px 17px 0 8px; align-items: center; color: #bbb; }
.presetfoot .btn { width: 77px; height: 18px; margin-left: auto; line-height: 16px; }

/* timeline */
.timeline { height: 175px; }
.center .tabs { height: 17px; }
.tl { height: 135px; display: grid; grid-template-columns: 225px minmax(0, 1fr) 12px; background: #383838; }
.lhead { height: 34px; display: flex; align-items: flex-end; padding: 0 8px 4px 15px; background: #444; }
.lhead .i12 { margin-bottom: 2px; }
.lhead .dots { width: 11px; text-align: center; }
.eye { width: 14px; height: 10px; margin: 0 7px 4px auto; }
.lock { width: 12px; height: 14px; margin-right: 9px; margin-bottom: 1px; }
.outline { width: 6px; height: 12px; border: 1px solid #111; margin-bottom: 2px; }
.lrow { height: 19px; display: flex; align-items: center; padding: 0 8px 0 25px; background: #9b761c; color: #fff; }
.lrow > svg { color: #ead9ae; }
.lrow span { margin-left: 6px; }
.lrow .kf { margin-left: auto; }
.key { width: 6px; height: 12px; margin: 0 4px; background: radial-gradient(circle at 50% 70%, #222 2px, #ead9ae 3px); }
.dot { width: 5px; height: 5px; border-radius: 50%; background: #fff; margin-left: 11px; margin-right: 3px; }
.cyan { width: 6px; height: 12px; background: #2ef0e4; margin-left: 9px; }
.frames { position: relative; border-left: 1px solid #666; overflow: hidden; }
.seconds, .ruler { display: grid; grid-template-columns: repeat(90, 8px); background: repeating-linear-gradient(90deg, transparent 0 184px, #4e4e4e 184px 192px), #444; font-size: 11px; line-height: 16px; height: 17px; }
.seconds span, .ruler span { grid-area: 1 / var(--f) / auto / span 3; color: #c8c8c8; }
.ruler { background: repeating-linear-gradient(90deg, #777 0 1px, transparent 1px 8px) 0 100% / 100% 3px no-repeat, repeating-linear-gradient(90deg, transparent 0 184px, #4e4e4e 184px 192px), #444; }
.ruler span { z-index: 2; }
.cells { height: 20px; border-bottom: 1px solid #4f4f4f; background: repeating-linear-gradient(90deg, transparent 0 7px, #4d4d4d 7px 8px), repeating-linear-gradient(90deg, transparent 0 32px, #3e3e3e 32px 40px), #444; }
.playhead { position: absolute; left: 3px; top: 0; bottom: 0; width: 3px; background: #702a2e; }
.playhead::before { content: ""; position: absolute; left: -4px; top: 2px; width: 10px; height: 32px; background: #7c2428; border: 1px solid #8f2c30; }
.ruler span:first-child { color: #f0b0a0; padding-left: 1px; }
.kfo { display: block; position: relative; z-index: 2; width: 5px; height: 6px; border: 1px solid #111; border-radius: 3px; margin: 0 2px; top: 9px; }
.tl .vs { margin-top: 34px; }
.tlfoot { flex: 1; display: flex; align-items: center; border-top: 1px solid #5c5c5c; color: #c0c0c0; padding-right: 15px; }
.lf { width: 225px; display: flex; gap: 8px; padding: 0 5px 0 9px; align-items: center; border-right: 1px solid #777; height: 22px; }
.lf .end + svg { margin-left: 4px; }
.tr { display: flex; gap: 6px; padding: 0 9px 2px 8px; border-right: 1px solid #2c2c2c; height: 20px; align-items: center; }
.tr svg { width: 12px; height: 12px; }
.nums { display: flex; align-items: center; font-size: 10px; padding-left: 8px; width: 124px; height: 16px; }
.fps { color: #5c5c5c; margin-left: 24px; }
.time { margin-left: auto; margin-right: 14px; display: flex; }
.nums .hot { font-size: 10px; }
.tlscroll { flex: 1; height: 14px; margin-right: 8px; }
.tlscroll i { width: 24px; height: 12px; margin-left: 4px; }
.mt1 { width: 12px; height: 6px; margin: 4px 10px 0; }
.mt2 { width: 18px; height: 9px; margin-left: 9px; }
input[type=range] { appearance: none; height: 12px; background: linear-gradient(#1c1c1c, #1c1c1c) center / 100% 4px no-repeat; }
input[type=range]::-webkit-slider-thumb { appearance: none; width: 9px; height: 7px; background: #3a3a3a; border: 1px solid #161616; }
.zoom { width: 90px; }

/* tools */
.tools { height: 86px; }
.toolrow { display: flex; align-items: flex-start; padding: 4px 2px 0 3px; height: 35px; }
.toolrow > button { width: 34px; height: 26px; display: flex; align-items: center; justify-content: center; position: relative; }
.toolrow > button svg { width: 18px; height: 18px; }
.toolrow > i { width: 1px; height: 26px; background: #303030; margin-right: 3px; }
.toolrow > .far { margin-left: 8px; }
.toolrow > i:last-child { margin: 0 0 0 auto; }
.toolrow .sel { background: #2e2e2e; border: 1px solid #161616; width: 30px; height: 25px; margin: 0 2px; }
.toolrow .more::after { content: ""; position: absolute; right: 3px; bottom: 1px; border: 2px solid transparent; border-right-color: #bbb; border-bottom-color: #bbb; }
.toolrow .txt { font: 21px/24px "Liberation Serif", serif; color: #ccc; }
.opts > button .i16 { width: 15px; height: 15px; }
.opts { height: 30px; padding-top: 0; }
.toolcolors { display: flex; align-items: center; gap: 3px; height: 24px; margin-left: auto; }
.toolcolors .well, .toolcolors .sw { width: 20px; height: 20px; }
.tb { margin: 0 5px; }
.toolcolors .i12 { margin-left: 2px; }

/* document */
.doc { flex: 1; display: grid; grid-template: 19px 27px minmax(0, 1fr) 13px / minmax(0, 1fr) 12px; background: #404040; }
.doc .tabs { grid-column: 1 / -1; height: 19px; font-size: 11px; line-height: 18px; }
.doc .tabs button { display: flex; align-items: center; gap: 9px; padding: 0 11px 0 10px; }
.scenebar { grid-column: 1 / -1; display: flex; align-items: center; background: #444; border-bottom: 1px solid #262626; padding: 0 9px 0 6px; color: #ccc; }
.scenebar > .i16:nth-child(2) { margin: 0 11px 0 15px; }
.low { margin: 12px 8px 0 0; }
.gl { margin: 0 4px; }
.scenebar .gl + .gl { margin-right: 11px; margin-left: 5px; }
.zoomcombo { width: 77px; }
.zoomcombo select { background: linear-gradient(90deg, #969696 58px, #484848 58px); color: #222; height: 17px; padding-left: 4px; font-size: 11px; }
.board { display: grid; place-content: center; padding: 14px 0 0 12px; }
.stage { width: 549px; height: 399px; background: #fdfdfd; outline: 1px solid #222; }
.dv { padding: 3px 0; justify-content: flex-start; }
.dv i { width: 11px; flex: 0 0 230px; margin-top: 204px; }
.dv svg:last-child { margin-top: auto; }
.dh { justify-content: flex-start; }
.dh i { height: 12px; flex: 0 0 431px; margin-left: 242px; }
.dh svg:last-child { margin-left: auto; }

/* properties */
.props { height: 492px; }
.what { display: flex; height: 63px; padding: 10px 0 0 28px; gap: 53px; }
.what .i16 { margin-top: 4px; }
h2 { display: flex; align-items: center; gap: 7px; padding-left: 6px; font-size: 12px; font-weight: 400; height: 20px; border: 1px solid #1c1c1c; border-width: 1px 0; background: linear-gradient(#505050, #484848); }
.pcolors, .pobj { display: flex; align-items: center; border-bottom: 1px solid #2c2c2c; padding-left: 52px; }
.pcolors { height: 34px; }
.pobj { height: 38px; gap: 12px; }
.pcolors .sw { width: 31px; height: 16px; margin-left: 16px; }
.pb { margin-left: 63px; }
.pcolors .nofill { background: #a9a0a2; margin-left: 9px; width: 30px; overflow: hidden; }
.stroke { display: grid; grid-template: 24px 31px 15px 30px / 44px 1fr; padding: 4px 16px 0 37px; align-items: center; border-bottom: 1px solid #2c2c2c; height: 102px; align-content: start; }
.stroke label { padding-bottom: 1px; }
.line { display: flex; align-items: center; gap: 8px; }
.stroke input[type=range] { flex: 1; margin: 0 9px 0 5px; }
.stroke input[type=range]::-webkit-slider-thumb { height: 11px; width: 12px; }
.stroke .num { width: 48px; height: 18px; margin-right: 31px; background: #999; border: 1px solid #1a1a1a; color: #222; padding-left: 4px; font-size: 11px; }
.line .combo { flex: 1; }
.sty select { background: linear-gradient(#fff, #fff) 12px 7px / calc(100% - 40px) 2px no-repeat, #404040; }
.wid select { background: linear-gradient(#4fbf4f, #4fbf4f) 10px 8px / calc(100% - 42px) 1px no-repeat, linear-gradient(#fff, #fff) 10px 3px / calc(100% - 42px) 11px no-repeat, #484848; }
.off2 { color: #666; }
.brs { width: 14px; height: 18px; margin-left: 2px; }
.stroke .btn { width: 99px; height: 17px; line-height: 15px; }
.pm2 { width: 14px; text-align: center; color: #606060; font-size: 18px; }
.scale { display: flex; align-items: center; height: 28px; padding-left: 37px; border-bottom: 1px solid #2c2c2c; }
.scale > label:first-child { width: 44px; }
.scale .combo { flex: 1; margin-right: 4px; }
.scale .check { margin-right: 58px; }
.ends { display: grid; grid-template: 24px 24px / 44px 1fr auto; align-items: center; padding: 7px 63px 0 37px; }
.ends i { width: 1px; height: 14px; background: #333; margin: 0 6px 0 5px; }
.miter em { font-style: normal; color: #575757; font-size: 10px; }

/* library */
.library { flex: 1; }
.libtop { display: flex; align-items: center; gap: 10px; padding: 0 8px 0 6px; height: 29px; border-bottom: 1px solid #262626; }
.libtop .combo { flex: 1; }
.libprev { height: 137px; border-bottom: 1px solid #4e4e4e; }
.libfind { display: flex; align-items: center; height: 24px; padding-left: 6px; font-size: 10px; color: #bbb; }
.libfind > span:first-child { width: 161px; }
.box { flex: 1; display: flex; align-items: center; height: 18px; background: #999; border: 1px solid #1a1a1a; color: #333; }
.box input { flex: 1; height: 16px; }
table { width: 100%; border-collapse: collapse; table-layout: fixed; }
th { height: 19px; padding: 0 0 0 5px; text-align: left; font-weight: 400; font-size: 12px; line-height: 16px; white-space: nowrap; background: linear-gradient(#4e4e4e, #404040); border-right: 1px solid #2a2a2a; }
tr { border: 1px solid #151515; border-width: 1px 0; }
th span { display: flex; align-items: center; justify-content: space-between; }
.sort { width: 11px; height: 11px; margin-right: 4px; }
.c1 { width: 71px; }
.c2 { width: 71px; }
.c3 { width: 129px; }
.c4 { width: 71px; }
.c5 { width: 18px; }
.libbody { flex: 1; background: #414141; }
.library .listfoot { gap: 8px; }

/* overlays */
.subtitle { position: absolute; left: 0; right: 0; bottom: 88px; text-align: center; font: 500 63px/92px "Noto Sans CJK SC", sans-serif; color: #fff; white-space: nowrap; text-shadow: 0 0 2px #222, 1px 1px 2px #222, -1px -1px 2px #222; }
.mark { position: absolute; left: 10px; bottom: 11px; display: flex; align-items: center; gap: 9px; font: 700 36px/40px "Open Sans", sans-serif; color: rgb(190 190 190 / .6); }
.meter { position: absolute; right: 0; top: 738px; width: 10px; height: 60px; border: 2px solid #8fae94; border-radius: 4px; background: #1c1c1c; padding-top: 29px; }
.meter i { display: block; height: 27px; background: repeating-linear-gradient(#8fd0a0 0 1px, #3b8a4e 1px 3px); }
```
